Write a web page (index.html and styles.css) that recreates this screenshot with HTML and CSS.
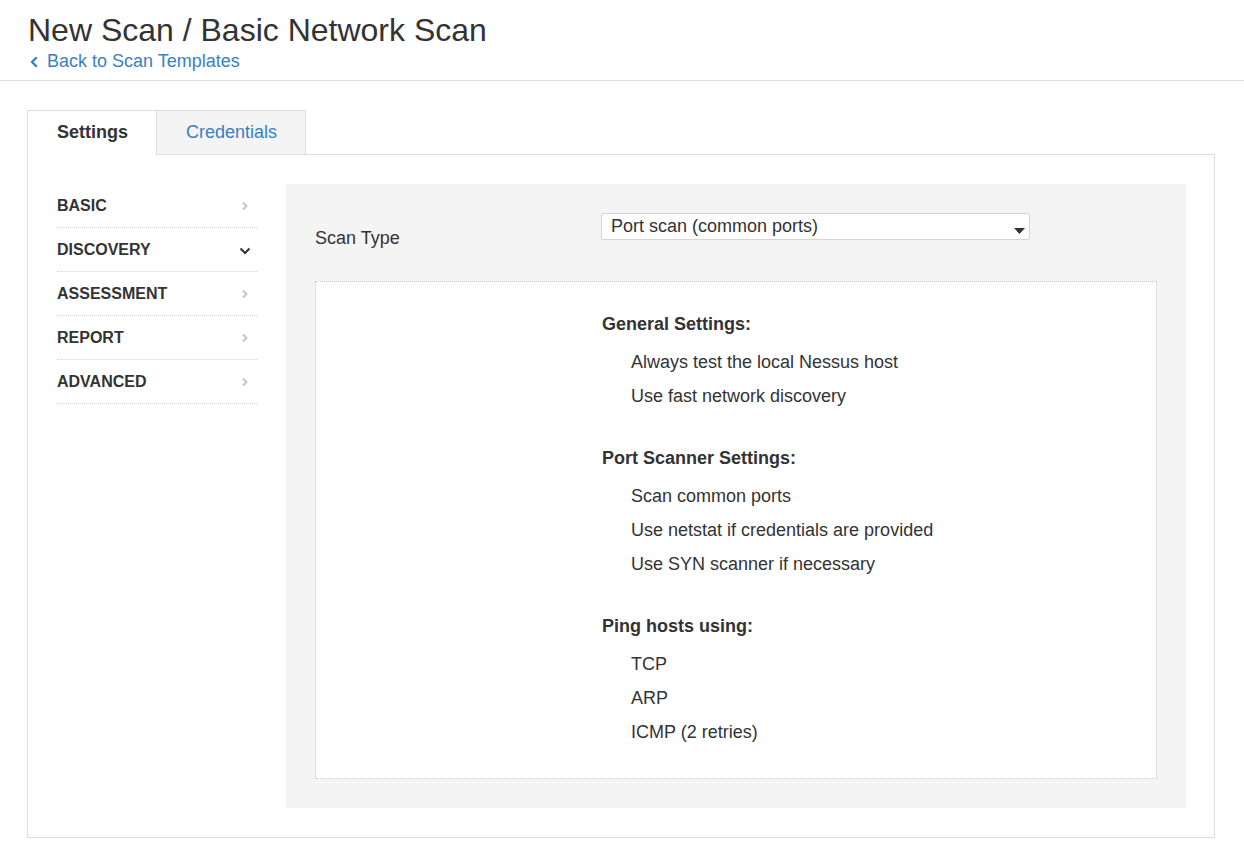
FILE: index.html
```html
<!DOCTYPE html>
<html lang="en">
<head>
<meta charset="utf-8">
<title>New Scan / Basic Network Scan</title>
<link rel="stylesheet" href="styles.css">
</head>
<body>
<header class="page-header">
  <h1 class="title">New Scan / Basic Network Scan</h1>
  <a class="back-link" href="#"><svg class="back-icon" width="8" height="10" viewBox="0 0 8 10"><path d="M6 1 L2 5 L6 9" fill="none" stroke="currentColor" stroke-width="2.4" stroke-linecap="round" stroke-linejoin="round"/></svg>Back to Scan Templates</a>
</header>
<main class="content">
  <div class="tabs">
    <div class="tab active">Settings</div>
    <div class="tab">Credentials</div>
  </div>
  <div class="panel">
    <nav class="side-nav">
      <div class="nav-item"><span>BASIC</span><svg class="chev" width="8" height="10" viewBox="0 0 8 10"><path d="M2 1.5 L5.5 5 L2 8.5" fill="none" stroke="currentColor" stroke-width="2"/></svg></div>
      <div class="nav-item open"><span>DISCOVERY</span><svg class="chev-down" width="12" height="8" viewBox="0 0 12 8"><path d="M1.5 1.5 L6 6 L10.5 1.5" fill="none" stroke="currentColor" stroke-width="2"/></svg></div>
      <div class="nav-item"><span>ASSESSMENT</span><svg class="chev" width="8" height="10" viewBox="0 0 8 10"><path d="M2 1.5 L5.5 5 L2 8.5" fill="none" stroke="currentColor" stroke-width="2"/></svg></div>
      <div class="nav-item"><span>REPORT</span><svg class="chev" width="8" height="10" viewBox="0 0 8 10"><path d="M2 1.5 L5.5 5 L2 8.5" fill="none" stroke="currentColor" stroke-width="2"/></svg></div>
      <div class="nav-item"><span>ADVANCED</span><svg class="chev" width="8" height="10" viewBox="0 0 8 10"><path d="M2 1.5 L5.5 5 L2 8.5" fill="none" stroke="currentColor" stroke-width="2"/></svg></div>
    </nav>
    <section class="settings">
      <div class="row">
        <div class="row-label">Scan Type</div>
        <div class="select"><span>Port scan (common ports)</span><svg class="caret" width="11" height="6" viewBox="0 0 11 6"><path d="M0 0 H11 L5.5 6 Z" fill="#333"/></svg></div>
      </div>
      <div class="summary">
        <div class="group">
          <div class="group-title">General Settings:</div>
          <div class="group-item">Always test the local Nessus host</div>
          <div class="group-item">Use fast network discovery</div>
        </div>
        <div class="group">
          <div class="group-title">Port Scanner Settings:</div>
          <div class="group-item">Scan common ports</div>
          <div class="group-item">Use netstat if credentials are provided</div>
          <div class="group-item">Use SYN scanner if necessary</div>
        </div>
        <div class="group">
          <div class="group-title">Ping hosts using:</div>
          <div class="group-item">TCP</div>
          <div class="group-item">ARP</div>
          <div class="group-item">ICMP (2 retries)</div>
        </div>
      </div>
    </section>
  </div>
</main>
</body>
</html>
```

FILE: styles.css
```css
* { box-sizing: border-box; }

html, body {
  margin: 0;
  padding: 0;
  background: #fff;
}

body {
  font-family: "Liberation Sans", Arial, Helvetica, sans-serif;
  color: #333;
  font-size: 18px;
}

.page-header {
  padding: 12px 0 8px 28px;
  border-bottom: 1px solid #ddd;
  height: 81px;
}

.title {
  margin: 0;
  font-size: 32px;
  font-weight: normal;
  line-height: 36px;
  color: #333;
}

.back-link {
  display: inline-flex;
  align-items: center;
  margin-top: 2px;
  margin-left: 2px;
  height: 22px;
  line-height: 22px;
  font-size: 18px;
  color: #3a7fc1;
  text-decoration: none;
}

.back-icon {
  margin-right: 9px;
  margin-top: 1px;
}

.content {
  padding: 29px 29px 0 27px;
}

.tabs {
  display: flex;
  align-items: flex-end;
}

.tab {
  height: 44px;
  line-height: 43px;
  padding: 0 28px 0 29px;
  border: 1px solid #ddd;
  border-bottom: none;
  background: #f4f4f4;
  color: #3a7fc1;
  font-size: 18px;
}

.tab + .tab {
  margin-left: -1px;
}

.tab.active {
  position: relative;
  z-index: 1;
  height: 45px;
  margin-bottom: -1px;
  background: #fff;
  color: #333;
  font-weight: bold;
  padding: 0 28px 0 29px;
}

.panel {
  display: flex;
  gap: 29px;
  border: 1px solid #ddd;
  padding: 29px 28px 29px 29px;
}

.side-nav {
  width: 200px;
  flex: none;
}

.nav-item {
  display: flex;
  align-items: center;
  justify-content: space-between;
  height: 44px;
  padding-top: 1px;
  border-bottom: 1px dotted #d4d4d4;
  font-size: 16px;
  font-weight: bold;
  color: #333;
}

.chev {
  color: #c8c8c8;
  margin-right: 8px;
}

.chev-down {
  color: #333;
  margin-right: 6px;
  margin-top: 1px;
}

.settings {
  flex: 1;
  background: #f4f4f4;
  padding: 29px 29px 29px 29px;
}

.row {
  display: flex;
  align-items: flex-start;
}

.row-label {
  width: 286px;
  flex: none;
  margin-top: 15px;
  line-height: 20px;
  font-size: 18px;
}

.select {
  width: 429px;
  height: 27px;
  display: flex;
  justify-content: space-between;
  background: #fff;
  border: 1px solid #d6d6d6;
  border-radius: 2px;
  padding: 0 4px 0 9px;
  line-height: 24px;
  font-size: 18px;
}

.caret {
  margin-top: 14px;
}

.summary {
  margin-top: 33px;
  background: #fff;
  border: 1px dotted #c8c8c8;
  padding: 32px 20px 29px 286px;
}

.group + .group {
  margin-top: 35px;
}

.group-title {
  font-weight: bold;
  line-height: 20px;
  margin-bottom: 11px;
}

.group-item {
  line-height: 34px;
  padding-left: 29px;
}
```
